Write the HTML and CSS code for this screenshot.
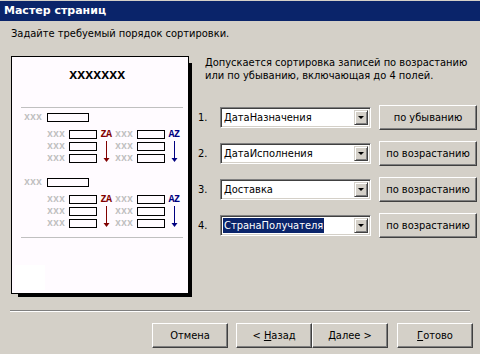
FILE: index.html
```html
<!DOCTYPE html>
<html lang="ru">
<head>
    <meta charset="UTF-8">
    <meta name="viewport" content="width=device-width, initial-scale=1.0">
    <title>Мастер страниц</title>
    <link rel="stylesheet" href="styles.css">
</head>
<body>
<div class="window">
    <div class="titlebar">Мастер страниц</div>
    <p class="intro">Задайте требуемый порядок сортировки.</p>

    <div class="main">
        <!-- Образец страницы -->
        <div class="preview">
            <div class="doc-title">xxxxxxx</div>
            <div class="rule"></div>

            <div class="group">
                <div class="group-head"><span class="xxx">xxx</span><span class="field wide"></span></div>
                <div class="group-body">
                    <div class="sort-col">
                        <div class="sort-fields">
                            <div class="sort-row"><span class="xxx">xxx</span><span class="field"></span></div>
                            <div class="sort-row"><span class="xxx">xxx</span><span class="field"></span></div>
                            <div class="sort-row"><span class="xxx">xxx</span><span class="field"></span></div>
                        </div>
                        <div class="sort-dir desc">
                            <span class="dir-label">ZA</span>
                            <svg width="7" height="21" viewBox="0 0 7 21"><rect x="3" y="0" width="1" height="18" fill="currentColor"/><polygon points="0.5,17 6.5,17 3.5,21" fill="currentColor"/></svg>
                        </div>
                    </div>
                    <div class="sort-col">
                        <div class="sort-fields">
                            <div class="sort-row"><span class="xxx">xxx</span><span class="field"></span></div>
                            <div class="sort-row"><span class="xxx">xxx</span><span class="field"></span></div>
                            <div class="sort-row"><span class="xxx">xxx</span><span class="field"></span></div>
                        </div>
                        <div class="sort-dir asc">
                            <span class="dir-label">AZ</span>
                            <svg width="7" height="21" viewBox="0 0 7 21"><rect x="3" y="0" width="1" height="18" fill="currentColor"/><polygon points="0.5,17 6.5,17 3.5,21" fill="currentColor"/></svg>
                        </div>
                    </div>
                </div>
            </div>

            <div class="group">
                <div class="group-head"><span class="xxx">xxx</span><span class="field wide"></span></div>
                <div class="group-body">
                    <div class="sort-col">
                        <div class="sort-fields">
                            <div class="sort-row"><span class="xxx">xxx</span><span class="field"></span></div>
                            <div class="sort-row"><span class="xxx">xxx</span><span class="field"></span></div>
                            <div class="sort-row"><span class="xxx">xxx</span><span class="field"></span></div>
                        </div>
                        <div class="sort-dir desc">
                            <span class="dir-label">ZA</span>
                            <svg width="7" height="21" viewBox="0 0 7 21"><rect x="3" y="0" width="1" height="18" fill="currentColor"/><polygon points="0.5,17 6.5,17 3.5,21" fill="currentColor"/></svg>
                        </div>
                    </div>
                    <div class="sort-col">
                        <div class="sort-fields">
                            <div class="sort-row"><span class="xxx">xxx</span><span class="field"></span></div>
                            <div class="sort-row"><span class="xxx">xxx</span><span class="field"></span></div>
                            <div class="sort-row"><span class="xxx">xxx</span><span class="field"></span></div>
                        </div>
                        <div class="sort-dir asc">
                            <span class="dir-label">AZ</span>
                            <svg width="7" height="21" viewBox="0 0 7 21"><rect x="3" y="0" width="1" height="18" fill="currentColor"/><polygon points="0.5,17 6.5,17 3.5,21" fill="currentColor"/></svg>
                        </div>
                    </div>
                </div>
            </div>

            <div class="rule bottom"></div>
            <div class="blank"></div>
        </div>

        <!-- Поля сортировки -->
        <div class="options">
            <p class="hint">Допускается сортировка записей по возрастанию<br>или по убыванию, включающая до 4 полей.</p>
            <div class="sort-list">
                <div class="sort-item">
                    <span class="num">1.</span>
                    <div class="combo"><span class="combo-text">ДатаНазначения</span><span class="combo-btn"><span class="arrow"></span></span></div>
                    <button class="btn order">по убыванию</button>
                </div>
                <div class="sort-item">
                    <span class="num">2.</span>
                    <div class="combo"><span class="combo-text">ДатаИсполнения</span><span class="combo-btn"><span class="arrow"></span></span></div>
                    <button class="btn order">по возрастанию</button>
                </div>
                <div class="sort-item">
                    <span class="num">3.</span>
                    <div class="combo"><span class="combo-text">Доставка</span><span class="combo-btn"><span class="arrow"></span></span></div>
                    <button class="btn order">по возрастанию</button>
                </div>
                <div class="sort-item">
                    <span class="num">4.</span>
                    <div class="combo"><span class="combo-text selected">СтранаПолучателя</span><span class="combo-btn"><span class="arrow"></span></span></div>
                    <button class="btn order">по возрастанию</button>
                </div>
            </div>
        </div>
    </div>

    <div class="separator"></div>

    <div class="footer">
        <button class="btn">Отмена</button>
        <div class="pair">
            <button class="btn">&lt; <u>Н</u>азад</button>
            <button class="btn"><u>Д</u>алее &gt;</button>
        </div>
        <button class="btn"><u>Г</u>отово</button>
    </div>
</div>
</body>
</html>
```

FILE: styles.css
```css
/* Окно мастера */
body {
    margin: 0;
    background: #d4d0c8;
}

.window {
    width: 480px;
    height: 354px;
    overflow: hidden;
    background: #d4d0c8;
    font: 11px/13px "DejaVu Sans Condensed", "DejaVu Sans", sans-serif;
    color: #000;
}

.titlebar {
    margin-top: 1px;
    height: 20px;
    padding-left: 4px;
    background: #0a246a;
    color: #fff;
    font: bold 11px/20px "DejaVu Sans", sans-serif;
}

.intro {
    margin: 6px 0 0;
    padding-left: 11px;
}

.main {
    display: flex;
    height: 254px;
    margin-top: 16px;
}

/* Образец страницы */
.preview {
    width: 176px;
    height: 236px;
    margin-left: 11px;
    border: 1px solid #000;
    background: #fffbff;
    box-shadow: 5px 5px 0 -2px #000;
}

.doc-title {
    height: 37px;
    padding-top: 13px;
    text-align: center;
    font: bold 14px/10px "Liberation Mono", monospace;
    letter-spacing: -0.4px;
    margin-left: -6px;
}

.rule {
    height: 1px;
    margin: 0 5px 0 9px;
    background: #c0c0c0;
}

.rule.bottom {
    margin-top: 9px;
}

.group {
    padding-top: 5px;
}

.group + .group {
    padding-top: 0;
    margin-top: 15px;
}

.xxx {
    width: 18px;
    flex: none;
    font: bold 10px/9px "Liberation Mono", monospace;
    color: #c0c0c0;
}

.field {
    box-sizing: border-box;
    width: 28px;
    height: 9px;
    border: 1px solid #000;
    flex: none;
}

.field.wide {
    width: 42px;
    height: 9px;
    margin-left: 5px;
}

.group-head {
    display: flex;
    align-items: center;
    padding-left: 12px;
    height: 9px;
}

.group-body {
    display: flex;
    gap: 4px;
    margin-top: 8px;
    padding-left: 35px;
}

.sort-col {
    display: flex;
}

.sort-fields {
    display: flex;
    flex-direction: column;
    gap: 3px;
}

.sort-row {
    display: flex;
    align-items: center;
    gap: 4px;
    height: 9px;
}

.sort-dir {
    display: flex;
    flex-direction: column;
    align-items: center;
    width: 10px;
    margin-left: 4px;
}

.sort-dir svg {
    display: block;
    margin-top: 2px;
}

.dir-label {
    font: bold 10px/9px "Liberation Mono", monospace;
    letter-spacing: -0.5px;
}

.desc { color: #800000; }
.asc { color: #000080; }

.blank {
    width: 30px;
    height: 25px;
    margin: 27px 0 0 3px;
    background: #fff;
}

/* Поля сортировки */
.options {
    margin-left: 9px;
}

.hint {
    margin: 0;
    padding-left: 7px;
}

.sort-list {
    display: flex;
    flex-direction: column;
    gap: 11px;
    margin-top: 23px;
}

.sort-item {
    display: flex;
    align-items: center;
    height: 25px;
}

.num {
    width: 22px;
}

.combo {
    box-sizing: border-box;
    display: flex;
    align-items: center;
    justify-content: space-between;
    width: 151px;
    height: 21px;
    border: 1px solid;
    border-color: #808080 #fff #fff #808080;
    box-shadow: inset 1px 1px #404040, inset -1px -1px #d4d0c8;
    background: #fff;
    padding: 2px;
}

.combo-text {
    padding: 0 1px;
    line-height: 15px;
}

.combo-text.selected {
    background: #0a246a;
    color: #fff;
}

.combo-btn {
    box-sizing: border-box;
    display: flex;
    align-items: center;
    justify-content: center;
    width: 14px;
    height: 15px;
    background: #d4d0c8;
    border: 1px solid;
    border-color: #d4d0c8 #404040 #404040 #d4d0c8;
    box-shadow: inset 1px 1px #fff, inset -1px -1px #808080;
}

.arrow {
    width: 0;
    height: 0;
    border-left: 3px solid transparent;
    border-right: 3px solid transparent;
    border-top: 3px solid #000;
}

.btn {
    box-sizing: border-box;
    height: 25px;
    padding: 0;
    background: #d4d0c8;
    border: 1px solid;
    border-color: #fff #404040 #404040 #fff;
    box-shadow: inset -1px -1px #808080, inset 1px 1px #d4d0c8;
    font: 11px "DejaVu Sans Condensed", "DejaVu Sans", sans-serif;
    color: #000;
}

.btn.order {
    width: 98px;
    margin-left: 8px;
}

.separator {
    height: 1px;
    margin: 0 10px;
    background: #808080;
    border-bottom: 1px solid #fff;
}

.footer {
    display: flex;
    margin-top: 11px;
    padding-left: 152px;
}

.footer .btn {
    width: 76px;
}

.pair {
    display: flex;
    margin: 0 9px 0 8px;
}
```
